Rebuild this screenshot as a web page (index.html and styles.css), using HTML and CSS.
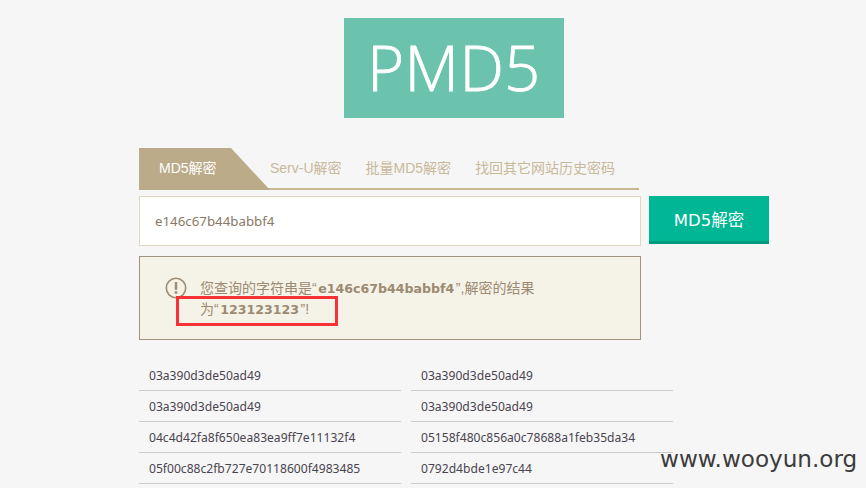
FILE: index.html
```html
<!DOCTYPE html>
<html lang="zh-CN">
<head>
<meta charset="utf-8">
<title>PMD5</title>
<link rel="stylesheet" href="styles.css">
</head>
<body>
<div class="page">
  <h1 class="logo">PMD5</h1>
  <nav class="tabs">
    <a class="tab active">MD5解密</a>
    <a class="tab serv">Serv-U解密</a>
    <a class="tab">批量MD5解密</a>
    <a class="tab">找回其它网站历史密码</a>
  </nav>
  <div class="search">
    <div class="input">e146c67b44babbf4</div>
    <button class="btn">MD5解密</button>
  </div>
  <div class="alert">
    <svg class="alert-icon" width="22" height="22" viewBox="0 0 24 24">
      <circle cx="12" cy="12" r="10.6" fill="none" stroke="#a08f76" stroke-width="1.8"/>
      <rect x="10.6" y="5.5" width="2.8" height="8.5" fill="#a08f76"/>
      <rect x="10.6" y="15.5" width="2.8" height="2.8" fill="#a08f76"/>
    </svg>
    <p class="alert-text">您查询的字符串是“<b>e146c67b44babbf4</b>”,解密的结果为“<b>123123123</b>”!</p>
    <div class="mark"></div>
  </div>
  <ul class="hashes">
    <li>03a390d3de50ad49</li>
    <li>03a390d3de50ad49</li>
    <li>03a390d3de50ad49</li>
    <li>03a390d3de50ad49</li>
    <li>04c4d42fa8f650ea83ea9ff7e11132f4</li>
    <li>05158f480c856a0c78688a1feb35da34</li>
    <li>05f00c88c2fb727e70118600f4983485</li>
    <li>0792d4bde1e97c44</li>
  </ul>
</div>
<div class="watermark">www.wooyun.org</div>
</body>
</html>
```

FILE: styles.css
```css
* { box-sizing: border-box; }
html, body { margin: 0; padding: 0; }
body {
  position: relative;
  width: 866px;
  height: 488px;
  overflow: hidden;
  background: #f6f6f6;
  font-family: "Liberation Sans", "Noto Sans CJK SC", sans-serif;
}
.page {
  width: 630px;
  margin-left: 139px;
  padding-top: 18px;
}
.logo {
  width: 220px;
  height: 100px;
  margin: 0 auto 30px;
  background: #6bc3ad;
  color: #fff;
  font: 300 63px/98px "Open Sans", sans-serif;
  letter-spacing: 0.4px;
  -webkit-text-stroke: 0.8px #fff;
  text-align: center;
}
.tabs {
  display: flex;
  width: 500px;
  height: 42px;
  border-bottom: 2px solid #c9b692;
}
.tab {
  height: 40px;
  margin-left: 24px;
  color: #c9b99b;
  font-size: 14px;
  line-height: 40px;
  white-space: nowrap;
}
.tab.active {
  width: 131px;
  height: 42px;
  margin-left: 0;
  padding-left: 20px;
  background: #bcab88;
  color: #fff;
  clip-path: polygon(0 0, 92px 0, 131px 100%, 0 100%);
}
.tab.serv { margin-left: 0; }
.search {
  display: flex;
  gap: 8px;
  margin-top: 6px;
  align-items: flex-start;
}
.input {
  width: 502px;
  height: 50px;
  padding-left: 15px;
  background: #fff;
  border: 1px solid #e0d8bd;
  color: #897a68;
  font-family: "Noto Sans", sans-serif;
  font-size: 13.3px;
  line-height: 49px;
}
.btn {
  width: 120px;
  height: 48px;
  padding: 0;
  border: 0;
  border-bottom: 3px solid #009a7f;
  background: #00b695;
  color: #fff;
  font-family: "DejaVu Sans", "Noto Sans CJK SC", sans-serif;
  font-size: 16.5px;
}
.alert {
  position: relative;
  display: flex;
  width: 502px;
  height: 84px;
  margin-top: 10px;
  padding: 20px 0 0 25px;
  background: #f5f3e8;
  border: 1px solid #a39280;
}
.alert-icon { flex: none; }
.alert-text {
  width: 340px;
  margin: 1px 0 0 13px;
  color: #9c8a72;
  font-size: 14px;
  line-height: 21px;
}
.alert-text b {
  margin: 0 1.5px;
  font-family: "DejaVu Sans", sans-serif;
  font-size: 12.6px;
}
.mark {
  position: absolute;
  left: 36px;
  top: 39px;
  width: 162px;
  height: 30px;
  border: 3px solid #f63236;
}
.hashes {
  display: grid;
  grid-template-columns: 262px 262px;
  column-gap: 10px;
  margin: 20px 0 0;
  padding: 0;
  list-style: none;
}
.hashes li {
  height: 31px;
  padding-left: 10px;
  border-bottom: 1px solid #cccccc;
  color: #4a4450;
  font-family: "Noto Sans", sans-serif;
  font-size: 12.1px;
  line-height: 32px;
}
.watermark {
  position: absolute;
  left: 660px;
  top: 444px;
  color: #3c3c3c;
  font-family: "DejaVu Sans", sans-serif;
  font-size: 23.1px;
  line-height: 30px;
}
```
